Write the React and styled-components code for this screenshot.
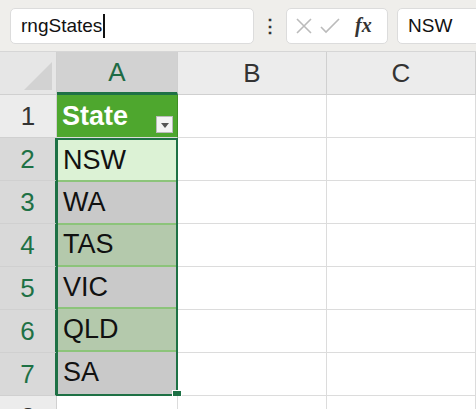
import React from 'react';
import styled, { createGlobalStyle } from 'styled-components';

const Global = createGlobalStyle`
  body { margin: 0; background: #fff; font-family: "Liberation Sans", Arial, sans-serif; overflow: hidden; }
`;

const Bar = styled.div`
  height: 52px;
  background: #efeeeb;
  display: flex;
  align-items: center;
  padding: 0 0 0 10px;
  border-bottom: 1px solid #d6d6d6;
  box-sizing: border-box;
  overflow: hidden;
`;

const Box = styled.div`
  height: 36px;
  background: #fff;
  border: 1px solid #dcdcdc;
  border-radius: 5px;
  box-sizing: border-box;
  display: flex;
  align-items: center;
  width: ${p => p.w}px;
  padding: 0 10px;
  font-size: 19px;
  color: #111;
  flex-shrink: 0;
`;

const Caret = styled.span`
  display: inline-block;
  width: 2px;
  height: 24px;
  background: #111;
  margin-left: 1px;
`;

const Dots = styled.div`
  width: 32px;
  flex-shrink: 0;
  text-align: center;
  font-size: 18px;
  font-weight: bold;
  color: #333;
`;

const Fx = styled.span`
  font-family: "Liberation Serif", serif;
  font-style: italic;
  font-weight: bold;
  font-size: 20px;
  color: #333;
  margin-left: 12px;
`;

const Grid = styled.div`
  display: grid;
  grid-template-columns: 57px 121px 149px 149px;
  grid-template-rows: 43px 43px repeat(6, 43px) 43px;
`;

const Corner = styled.div`
  background: #e6e6e6;
  border-right: 1px solid #d0d0d0;
  border-bottom: 1px solid #d0d0d0;
  position: relative;
  &::after {
    content: '';
    position: absolute;
    right: 4px;
    bottom: 4px;
    border-style: solid;
    border-width: 0 0 28px 28px;
    border-color: transparent transparent #d2d2d2 transparent;
  }
`;

const ColHead = styled.div`
  background: ${p => (p.sel ? '#d2d2d2' : '#ececec')};
  color: ${p => (p.sel ? '#1e6b45' : '#333')};
  border-right: 1px solid #d0d0d0;
  border-bottom: ${p => (p.sel ? '3px solid #1e7145' : '1px solid #d0d0d0')};
  display: flex;
  align-items: center;
  justify-content: center;
  font-size: 26px;
  box-sizing: border-box;
`;

const RowHead = styled.div`
  background: ${p => (p.sel ? '#d9d9d9' : '#ececec')};
  color: ${p => (p.sel ? '#1e7145' : '#333')};
  border-bottom: 1px solid #d0d0d0;
  border-right: ${p => (p.sel ? '2px solid #1e7145' : '1px solid #d0d0d0')};
  display: flex;
  align-items: center;
  justify-content: center;
  font-size: 26px;
  box-sizing: border-box;
`;

const Cell = styled.div`
  background: #fff;
  border-right: 1px solid #dcdcdc;
  border-bottom: 1px solid #dcdcdc;
  display: flex;
  align-items: center;
  padding-left: 5px;
  font-size: 27px;
  color: #111;
  box-sizing: border-box;
  position: relative;
`;

const HeadCell = styled(Cell)`
  background: #4ea72e;
  color: #fff;
  font-weight: bold;
  border-right: 1px solid #3f8f24;
`;

const Drop = styled.div`
  position: absolute;
  right: 4px;
  bottom: 4px;
  width: 17px;
  height: 17px;
  background: #f4f4f4;
  border: 1px solid #bbb;
  box-sizing: border-box;
  &::after {
    content: '';
    position: absolute;
    left: 4px;
    top: 6px;
    border-style: solid;
    border-width: 5px 4px 0 4px;
    border-color: #555 transparent transparent transparent;
  }
`;

const Sel = styled.div`
  grid-column: 2;
  grid-row: 3 / span 6;
  display: grid;
  grid-auto-rows: 1fr;
  border: 2px solid #1e7145;
  margin-left: -1px;
  position: relative;
  &::after {
    content: '';
    position: absolute;
    right: -6px;
    bottom: -6px;
    width: 8px;
    height: 8px;
    background: #1e7145;
    border: 1px solid #fff;
  }
`;

const SelCell = styled.div`
  background: ${p => p.bg};
  border-bottom: 2px solid #8cc47a;
  display: flex;
  align-items: center;
  padding-left: 5px;
  font-size: 27px;
  color: #111;
  &:last-child { border-bottom: none; }
`;

const states = [
  ['NSW', '#dcf2d5'],
  ['WA', '#c9c9c9'],
  ['TAS', '#b4c9ac'],
  ['VIC', '#c9c9c9'],
  ['QLD', '#b4c9ac'],
  ['SA', '#c9c9c9'],
];

export default function App() {
  return (
    <>
      <Global />
      <Bar>
        <Box w={244}>rngStates<Caret /></Box>
        <Dots>⋮</Dots>
        <Box w={102} style={{ padding: '0 0 0 8px' }}>
          <svg width="48" height="20" viewBox="0 0 48 20" fill="none" stroke="#bbb" strokeWidth="1.6">
            <path d="M2 3 L16 17 M16 3 L2 17" />
            <path d="M26 11 L31 16 L44 3" />
          </svg>
          <Fx>fx</Fx>
        </Box>
        <Box w={100} style={{ marginLeft: 9 }}>NSW</Box>
      </Bar>
      <Grid>
        <Corner />
        <ColHead sel>A</ColHead>
        <ColHead>B</ColHead>
        <ColHead>C</ColHead>
        <RowHead>1</RowHead>
        <HeadCell>State<Drop /></HeadCell>
        <Cell />
        <Cell />
        {[2, 3, 4, 5, 6, 7].map(n => (
          <React.Fragment key={n}>
            <RowHead sel style={{ gridColumn: 1, gridRow: n + 1 }}>{n}</RowHead>
            <Cell style={{ gridColumn: 3, gridRow: n + 1 }} />
            <Cell style={{ gridColumn: 4, gridRow: n + 1 }} />
          </React.Fragment>
        ))}
        <Sel>
          {states.map(([s, bg]) => (
            <SelCell key={s} bg={bg}>{s}</SelCell>
          ))}
        </Sel>
        <RowHead style={{ gridColumn: 1, gridRow: 9 }}>8</RowHead>
        <Cell /><Cell /><Cell />
      </Grid>
    </>
  );
}
